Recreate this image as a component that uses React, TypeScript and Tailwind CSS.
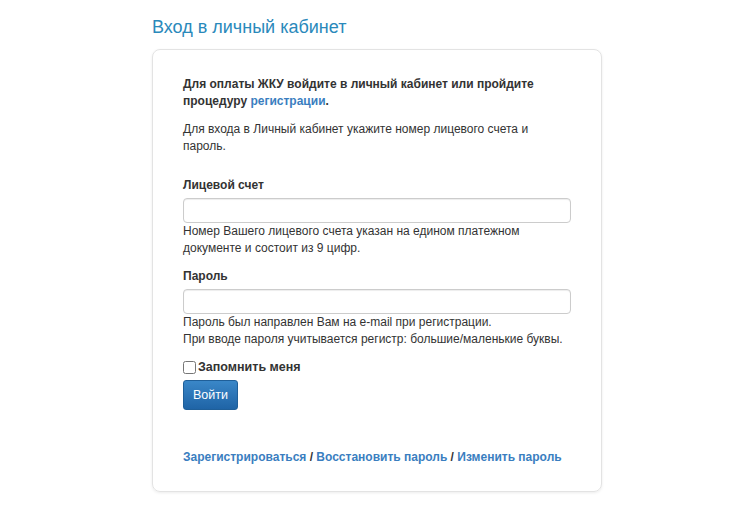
import { useState } from 'react';

const Field = ({ label, type, help }: { label: string; type: string; help: React.ReactNode }) => (
  <div>
    <label className="block font-bold leading-[18px] mb-[4px]">{label}</label>
    <input
      type={type}
      className="block w-[388px] h-[25px] rounded-[4px] border border-[#cccccc] bg-white px-2 shadow-[inset_0_1px_1px_rgba(0,0,0,0.075)] outline-none"
    />
    <div className="leading-[17px]">{help}</div>
  </div>
);

const App = () => {
  const [remember, setRemember] = useState(false);

  return (
    <div className="min-h-[517px] bg-white text-[12px] text-[#333333] font-['Liberation_Sans',Arial,sans-serif]">
      <div className="w-[450px] ml-[152px] pt-[15px]">
        <h1 className="text-[18px] leading-[24px] text-[#2a89bb] mb-[10px]">Вход в личный кабинет</h1>

        <div className="rounded-[8px] border border-[#e3e3e3] shadow-[0_1px_3px_rgba(0,0,0,0.08)] px-[30px] pt-[26px] pb-[25px]">
          <p className="font-bold leading-[17px]">
            Для оплаты ЖКУ войдите в личный кабинет или пройдите процедуру{' '}
            <a href="#" className="text-[#3a7ec0]">регистрации</a>.
          </p>
          <p className="leading-[17px] mt-[11px] w-[360px]">
            Для входа в Личный кабинет укажите номер лицевого счета и пароль.
          </p>

          <div className="mt-[21px] flex flex-col gap-[10px]">
            <Field
              label="Лицевой счет"
              type="text"
              help={
                <>
                  Номер Вашего лицевого счета указан на едином платежном
                  <br />
                  документе и состоит из 9 цифр.
                </>
              }
            />
            <Field
              label="Пароль"
              type="password"
              help={
                <>
                  Пароль был направлен Вам на e-mail при регистрации.
                  <br />
                  При вводе пароля учитывается регистр: большие/маленькие буквы.
                </>
              }
            />
          </div>

          <label className="mt-[10px] flex items-center gap-[2px] font-bold text-[12.5px] leading-[18px]">
            <input
              type="checkbox"
              checked={remember}
              onChange={(e) => setRemember(e.target.checked)}
              className="w-[13px] h-[13px] m-0"
            />
            Запомнить меня
          </label>

          <button className="mt-[4px] h-[30px] px-[9px] rounded-[3px] border border-[#1f5f99] bg-gradient-to-b from-[#3a87c8] to-[#1f64a6] text-white text-[12.5px]">
            Войти
          </button>

          <div className="mt-[38px] font-bold leading-[18px] text-[#333]">
            <a href="#" className="text-[#3a7ec0]">Зарегистрироваться</a>
            {' / '}
            <a href="#" className="text-[#3a7ec0]">Восстановить пароль</a>
            {' / '}
            <a href="#" className="text-[#3a7ec0]">Изменить пароль</a>
          </div>
        </div>
      </div>
    </div>
  );
};

export default App;
